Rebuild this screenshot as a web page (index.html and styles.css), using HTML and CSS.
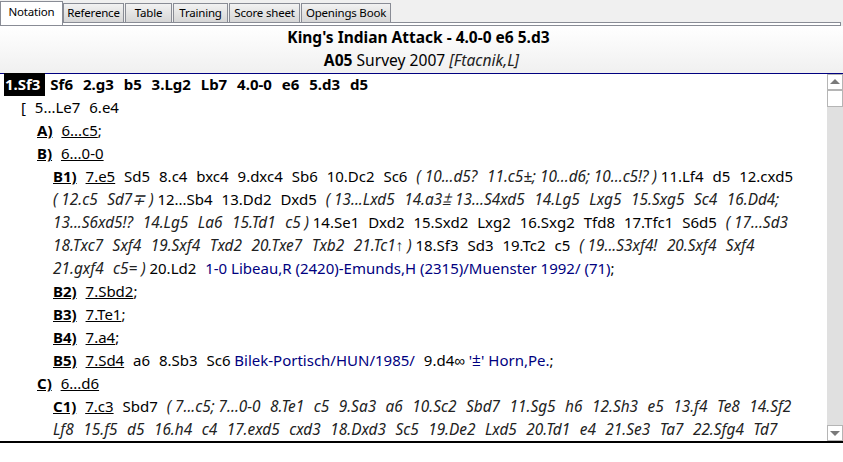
FILE: index.html

```html
<!DOCTYPE html>
<html lang="en">
<head>
  <meta charset="UTF-8">
  <title>Notation</title>
  <link rel="stylesheet" href="styles.css">
</head>
<body>
  <div class="tab-bar">
    <div class="tabs">
      <div class="tab active">Notation</div>
      <div class="tab w-ref">Reference</div>
      <div class="tab w-table">Table</div>
      <div class="tab w-training">Training</div>
      <div class="tab w-score">Score sheet</div>
      <div class="tab w-book">Openings Book</div>
    </div>
    <div class="tab-strip"></div>
  </div>

  <div class="header">
    <div class="title">King's Indian Attack - 4.0-0 e6 5.d3</div>
    <div class="subtitle"><b>A05</b> Survey 2007 <i>[Ftacnik,L]</i></div>
  </div>

  <div class="main">
    <div class="notation">
      <div class="line main-line"><span class="current">1.Sf3</span> Sf6 2.g3 b5 3.Lg2 Lb7 4.0-0 e6 5.d3 d5</div>
      <div class="line lvl0">[ 5...Le7 6.e4</div>
      <div class="line lvl1"><b class="key">A)</b> <u>6...c5</u>;</div>
      <div class="line lvl1"><b class="key">B)</b> <u>6...0-0</u></div>
      <div class="line lvl2"><b class="key">B1)</b> <u>7.e5</u> Sd5 8.c4 bxc4 9.dxc4 Sb6 10.Dc2 Sc6 <i>(&#8197;10...d5? 11.c5±;&#8197;10...d6;&#8197;10...c5!?&#8197;)</i>&#8197;11.Lf4 d5 12.cxd5</div>
      <div class="line lvl2"><i>(&#8197;12.c5 Sd7∓&#8197;)</i>&#8197;12...Sb4 13.Dd2 Dxd5 <i>(&#8197;13...Lxd5 14.a3⩲&#8197;13...S4xd5 14.Lg5 Lxg5 15.Sxg5 Sc4 16.Dd4;</i></div>
      <div class="line lvl2"><i>13...S6xd5!? 14.Lg5 La6 15.Td1 c5&#8197;)</i>&#8197;14.Se1 Dxd2 15.Sxd2 Lxg2 16.Sxg2 Tfd8 17.Tfc1 S6d5 <i>(&#8197;17...Sd3</i></div>
      <div class="line lvl2"><i>18.Txc7 Sxf4 19.Sxf4 Txd2 20.Txe7 Txb2 21.Tc1↑&#8197;)</i>&#8197;18.Sf3 Sd3 19.Tc2 c5 <i>(&#8197;19...S3xf4! 20.Sxf4 Sxf4</i></div>
      <div class="line lvl2"><i>21.gxf4 c5=&#8197;)</i>&#8197;20.Ld2 <span class="source">1-0 Libeau,R (2420)-Emunds,H (2315)/Muenster 1992/ (71)</span>;</div>
      <div class="line lvl2"><b class="key">B2)</b> <u>7.Sbd2</u>;</div>
      <div class="line lvl2"><b class="key">B3)</b> <u>7.Te1</u>;</div>
      <div class="line lvl2"><b class="key">B4)</b> <u>7.a4</u>;</div>
      <div class="line lvl2"><b class="key">B5)</b> <u>7.Sd4</u> a6 8.Sb3 Sc6&#8197;<span class="source">Bilek-Portisch/HUN/1985/</span> 9.d4∞&#8197;<span class="source">'⩲' Horn,Pe.</span>;</div>
      <div class="line lvl1"><b class="key">C)</b> <u>6...d6</u></div>
      <div class="line lvl2"><b class="key">C1)</b> <u>7.c3</u> Sbd7 <i>(&#8197;7...c5;&#8197;7...0-0 8.Te1 c5 9.Sa3 a6 10.Sc2 Sbd7 11.Sg5 h6 12.Sh3 e5 13.f4 Te8 14.Sf2</i></div>
      <div class="line lvl2"><i>Lf8 15.f5 d5 16.h4 c4 17.exd5 cxd3 18.Dxd3 Sc5 19.De2 Lxd5 20.Td1 e4 21.Se3 Ta7 22.Sfg4 Td7</i></div>
    </div>
    <div class="scrollbar">
      <div class="sb-btn"><svg width="12" height="6" viewBox="0 0 12 6"><path d="M6 0 L11 5 L1 5 Z" fill="#7a7a7a"/></svg></div>
      <div class="sb-thumb"></div>
      <div class="sb-track"></div>
      <div class="sb-btn"><svg width="12" height="6" viewBox="0 0 12 6"><path d="M1 1 L11 1 L6 6 Z" fill="#7a7a7a"/></svg></div>
    </div>
  </div>
</body>
</html>
```

FILE: styles.css

```css
body {
  margin: 0;
  width: 843px;
  height: 462px;
  overflow: hidden;
  background: #fff;
  font-family: "Noto Sans", Tahoma, sans-serif;
  font-size: 15px;
  color: #000;
}
.tab-bar {
  background: #f0f0f0;
  height: 26px;
}
.tabs {
  display: flex;
  align-items: flex-start;
  height: 22px;
  font-size: 11.5px;
  letter-spacing: -0.2px;
}
.tab {
  box-sizing: border-box;
  height: 19px;
  margin-top: 3px;
  margin-right: 1px;
  padding-top: 1px;
  text-align: center;
  border: 1px solid #898c95;
  border-bottom: none;
  background: linear-gradient(#f2f2f2, #d6d6d6);
  white-space: nowrap;
}
.tab.active {
  position: relative;
  z-index: 1;
  width: 63px;
  height: 24px;
  margin-top: 1px;
  margin-right: 0;
  padding-top: 2px;
  background: #fff;
}
.w-ref { width: 61px; }
.w-table { width: 47px; }
.w-training { width: 55px; }
.w-score { width: 71px; }
.w-book { width: 90px; }
.tab-strip {
  box-sizing: border-box;
  height: 4px;
  margin-right: 2px;
  background: #fff;
  border: 1px solid #898c95;
}
.header {
  height: 48px;
  box-sizing: border-box;
  text-align: center;
  background: linear-gradient(#fff, #f0f0f0);
  border-bottom: 1px solid #000080;
  line-height: 23px;
}
.title {
  font-weight: bold;
  font-size: 15.5px;
  padding-right: 6px;
}
.subtitle {
  font-size: 15.6px;
}
.subtitle i {
  color: #222;
}
.main {
  display: flex;
  height: 367px;
  border-bottom: 2px solid #000;
}
.notation {
  flex: 1;
  margin-top: -1px;
  overflow: hidden;
}
.line {
  height: 23px;
  line-height: 23px;
  white-space: nowrap;
  word-spacing: 5px;
}
.main-line {
  font-weight: bold;
  padding-left: 5px;
  word-spacing: 6px;
}
.current {
  background: #000;
  color: #fff;
  padding: 2px 5px 2px 1px;
  margin: 0 -5px 0 -1px;
}
.lvl0 { padding-left: 21px; }
.lvl1 { padding-left: 37px; }
.lvl2 { padding-left: 53px; }
.key {
  text-decoration: underline;
}
.line i {
  color: #222;
  font-size: 15.4px;
  word-spacing: 5.5px;
}
.source {
  color: #000080;
  word-spacing: 0;
}
.scrollbar {
  width: 16px;
  display: flex;
  flex-direction: column;
  background: #e0e0e0;
}
.sb-btn {
  box-sizing: border-box;
  height: 16px;
  display: flex;
  align-items: center;
  justify-content: center;
  background: #fff;
  border: 1px solid #b5b5b5;
}
.sb-thumb {
  box-sizing: border-box;
  height: 17px;
  background: #fff;
  border: 1px solid #b5b5b5;
}
.sb-track {
  flex: 1;
}
```
